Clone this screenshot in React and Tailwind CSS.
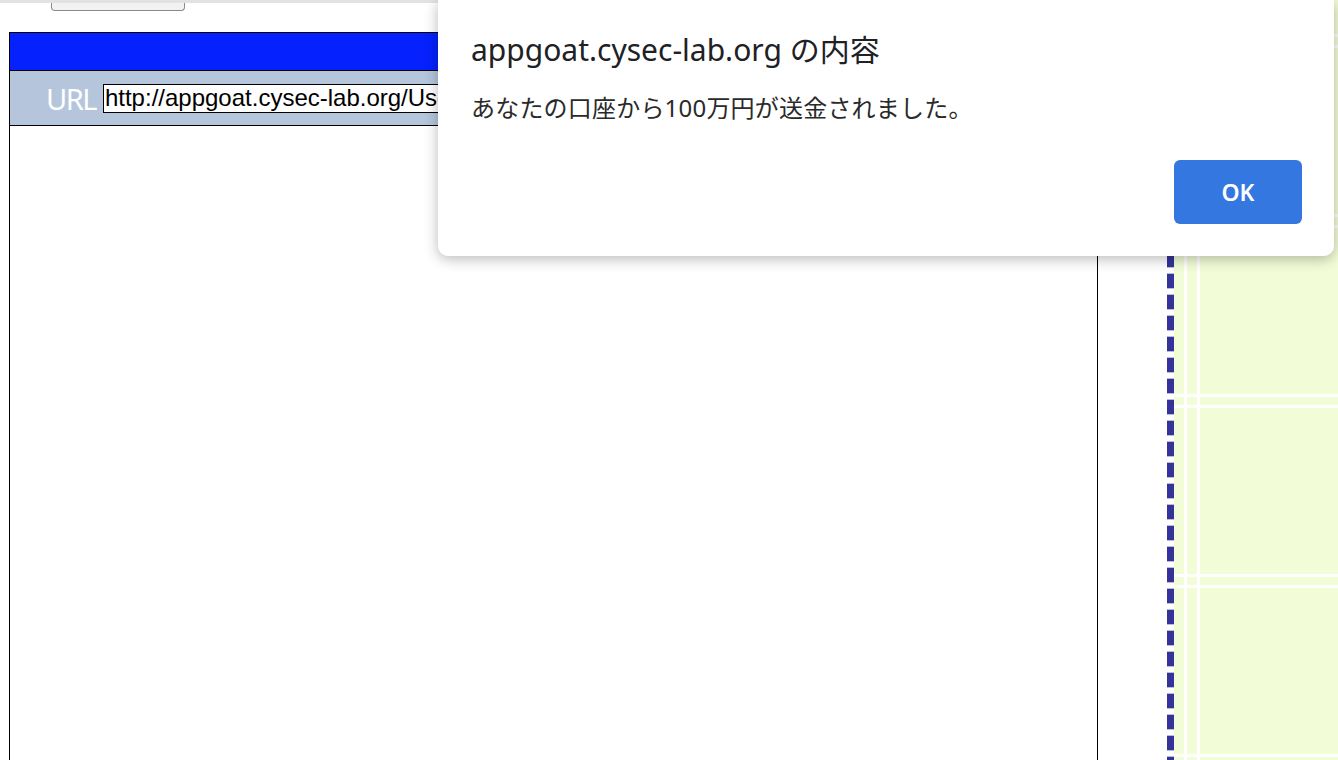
import React from "react";

// Page behind the alert: a left frame and a plaid side column
function LeftFrame() {
  return (
    <div className="w-[1167px] shrink-0 bg-white">
      {/* top strip and the bottom of a scrolled-off button */}
      <div className="h-[3px] bg-[#e2e2e2]" />
      <div className="pl-[51px]">
        <div className="w-[134px] h-[8px] border border-t-0 border-[#8a8a8a] rounded-b-[4px] bg-[#f2f2f2]" />
      </div>

      <div className="mt-[21px] ml-[9px] w-[1089px] h-[900px] border border-black flex flex-col">
        <div className="h-[38px] bg-[#0421fe] border-b border-black" />
        <div className="h-[55px] bg-[#b4c5dc] border-b border-black flex items-center pl-[36px] gap-[7px]">
          <span className="text-white text-[29px] tracking-[-1.5px] leading-none font-['Noto_Sans',sans-serif]">
            URL
          </span>
          {/* the field runs on under the alert; only its visible part is drawn */}
          <div className="w-[336px] h-[29px] border border-r-0 border-black bg-white flex items-center pl-[1px] overflow-hidden">
            <span className="text-black text-[24px] leading-[26px] whitespace-nowrap font-['Liberation_Sans',Arial,sans-serif]">
              http://appgoat.cysec-lab.org/Use
            </span>
          </div>
        </div>
        <div className="flex-1 bg-white" />
      </div>
    </div>
  );
}

function SideColumn() {
  return (
    <div className="flex flex-1">
      <div className="w-[7px] shrink-0 bg-white bg-[image:repeating-linear-gradient(to_bottom,#333399_0px,#333399_14px,#b9b9e2_14px,#b9b9e2_15px,#ffffff_15px,#ffffff_20px,#b9b9e2_20px,#b9b9e2_21px)] bg-[position:0_1px]" />
      <div className="flex-1 bg-[#f2fcd6] bg-[image:repeating-linear-gradient(to_right,transparent_0px,transparent_10px,#ffffff_10px,#ffffff_13px,transparent_13px,transparent_23px,#ffffff_23px,#ffffff_26px,transparent_26px,transparent_180px),repeating-linear-gradient(to_bottom,transparent_0px,transparent_34px,#ffffff_34px,#ffffff_37px,transparent_37px,transparent_45px,#ffffff_45px,#ffffff_48px,transparent_48px,transparent_180px)]" />
    </div>
  );
}

function AlertDialog() {
  return (
    <div className="absolute left-[438px] top-0 w-[896px] h-[256px] bg-white rounded-b-[10px] shadow-[0_3px_14px_rgba(0,0,0,0.28)] pl-[33px] pr-[32px] pt-[34px] flex flex-col font-['Noto_Sans','Noto_Sans_CJK_JP',sans-serif] text-[#202124]">
      <div className="text-[30px] leading-[32px] whitespace-nowrap">
        appgoat.cysec-lab.org の内容
      </div>
      <div className="mt-[27px] text-[24px] leading-[30px] tracking-[0.2px] whitespace-nowrap text-[#2a2a2a]">
        あなたの口座から100万円が送金されました。
      </div>
      <div className="mt-[37px] flex justify-end">
        <button className="w-[128px] h-[64px] rounded-[6px] bg-[#3477e0] text-white text-[23px] font-semibold flex items-center justify-center">
          OK
        </button>
      </div>
    </div>
  );
}

export default function App() {
  return (
    <div className="relative w-[1338px] h-[760px] overflow-hidden bg-white">
      <div className="flex h-full">
        <LeftFrame />
        <SideColumn />
      </div>
      <AlertDialog />
    </div>
  );
}
